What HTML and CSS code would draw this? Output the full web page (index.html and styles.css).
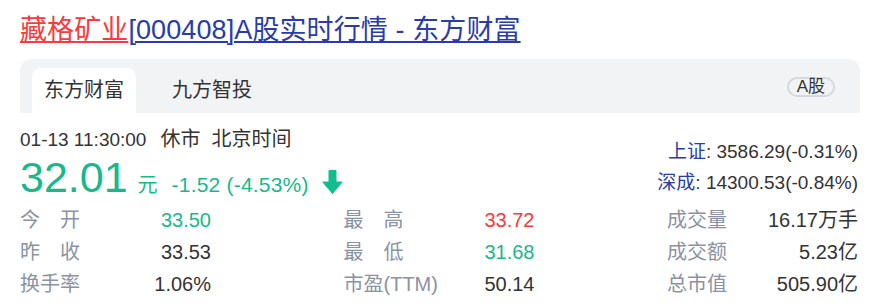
FILE: index.html
```html
<!DOCTYPE html>
<html lang="zh-CN">
<head>
<meta charset="utf-8">
<title>藏格矿业[000408]A股实时行情 - 东方财富</title>
<link rel="stylesheet" href="styles.css">
</head>
<body>
<div class="page">
  <h1 class="title"><a class="title-red" href="#">藏格矿业</a><a class="title-blue" href="#">[000408]A股实时行情 - 东方财富</a></h1>

  <div class="tabbar">
    <div class="tab tab-active">东方财富</div>
    <div class="tab">九方智投</div>
    <span class="pill">A股</span>
  </div>

  <div class="quote">
    <div class="quote-main">
      <div class="timeline"><span class="time">01-13 11:30:00</span><span class="status">休市</span><span class="zone">北京时间</span></div>
      <div class="priceline">
        <span class="price">32.01</span><span class="unit">元</span><span class="change">-1.52 (-4.53%)</span>
        <svg class="arrow" width="21" height="24" viewBox="0 0 21 24" aria-hidden="true"><path d="M7 0.5h7v11.5h6.2L10.5 23.5 0.8 12H7z" fill="#12bd8e" stroke="#12bd8e" stroke-width="1" stroke-linejoin="round"/></svg>
      </div>
    </div>
    <div class="indices">
      <div class="index-row"><span class="index-name">上证</span>: 3586.29(-0.31%)</div>
      <div class="index-row"><span class="index-name">深成</span>: 14300.53(-0.84%)</div>
    </div>
  </div>

  <div class="stats">
    <div class="item"><span class="label">今开</span><span class="value green">33.50</span></div>
    <div class="item"><span class="label">最高</span><span class="value red">33.72</span></div>
    <div class="item"><span class="label">成交量</span><span class="value">16.17万手</span></div>

    <div class="item"><span class="label">昨收</span><span class="value">33.53</span></div>
    <div class="item"><span class="label">最低</span><span class="value green">31.68</span></div>
    <div class="item"><span class="label">成交额</span><span class="value">5.23亿</span></div>

    <div class="item"><span class="label">换手率</span><span class="value">1.06%</span></div>
    <div class="item"><span class="label label-free">市盈(TTM)</span><span class="value">50.14</span></div>
    <div class="item"><span class="label">总市值</span><span class="value">505.90亿</span></div>
  </div>
</div>
</body>
</html>
```

FILE: styles.css
```css
html, body {
  margin: 0;
  padding: 0;
  background: #ffffff;
}

body {
  font-family: "Liberation Sans", Arial, "Noto Sans CJK SC", sans-serif;
  color: #333333;
}

.page {
  width: 840px;
  padding: 0 27px 0 20px;
}

.title {
  margin: 0;
  padding-top: 12px;
  font-size: 27px;
  font-weight: normal;
  line-height: 36px;
  white-space: nowrap;
  letter-spacing: 0.1px;
}

.title a {
  text-decoration: underline;
  text-decoration-thickness: 2px;
  text-underline-offset: 2px;
}

.title-red {
  color: #f93b3b;
}

.title-blue {
  color: #2a3ca8;
}

.tabbar {
  margin-top: 11px;
  height: 54px;
  box-sizing: border-box;
  padding: 9px 25px 0 12px;
  background: #f2f3f5;
  border-radius: 12px 12px 0 0;
  display: flex;
  align-items: flex-start;
  gap: 24px;
}

.tab {
  height: 45px;
  padding: 0 12px;
  font-size: 20px;
  line-height: 45px;
  color: #333333;
  border-radius: 9px 9px 0 0;
}

.tab-active {
  background: #ffffff;
}

.pill {
  margin-left: auto;
  margin-top: 9px;
  height: 20px;
  box-sizing: border-box;
  padding: 0 8px;
  border: 2px solid #d5d8df;
  border-radius: 10px;
  font-size: 17px;
  line-height: 16px;
  color: #333333;
}

.quote {
  display: flex;
  justify-content: space-between;
  align-items: flex-end;
}

.timeline {
  margin-top: 14px;
  font-size: 20px;
  line-height: 24px;
  white-space: nowrap;
}

.time {
  font-size: 19px;
}

.status {
  margin-left: 14px;
}

.zone {
  margin-left: 11px;
}

.priceline {
  margin-top: 3px;
  display: flex;
  align-items: baseline;
  color: #16b98b;
  white-space: nowrap;
}

.price {
  font-size: 43px;
  line-height: 44px;
}

.unit {
  margin-left: 10px;
  font-size: 20px;
}

.change {
  margin-left: 14px;
  font-size: 21px;
  letter-spacing: 0.2px;
}

.arrow {
  margin-left: 13px;
  align-self: flex-end;
  margin-bottom: 5px;
}

.indices {
  text-align: right;
  font-size: 19px;
  line-height: 31px;
  padding-right: 2px;
  padding-bottom: 1px;
}

.index-name {
  color: #2a3ca8;
}

.stats {
  margin-top: 5px;
  width: 838px;
  display: grid;
  grid-template-columns: repeat(3, 191px);
  justify-content: space-between;
  font-size: 20px;
  line-height: 32px;
}

.item {
  display: flex;
  justify-content: space-between;
  white-space: nowrap;
}

.label {
  width: 60px;
  color: #8a92a3;
  text-align: justify;
  text-align-last: justify;
}

.label-free {
  width: auto;
  text-align: left;
  text-align-last: auto;
}

.value {
  color: #333333;
}

.green {
  color: #16b98b;
}

.red {
  color: #ff3737;
}
```
